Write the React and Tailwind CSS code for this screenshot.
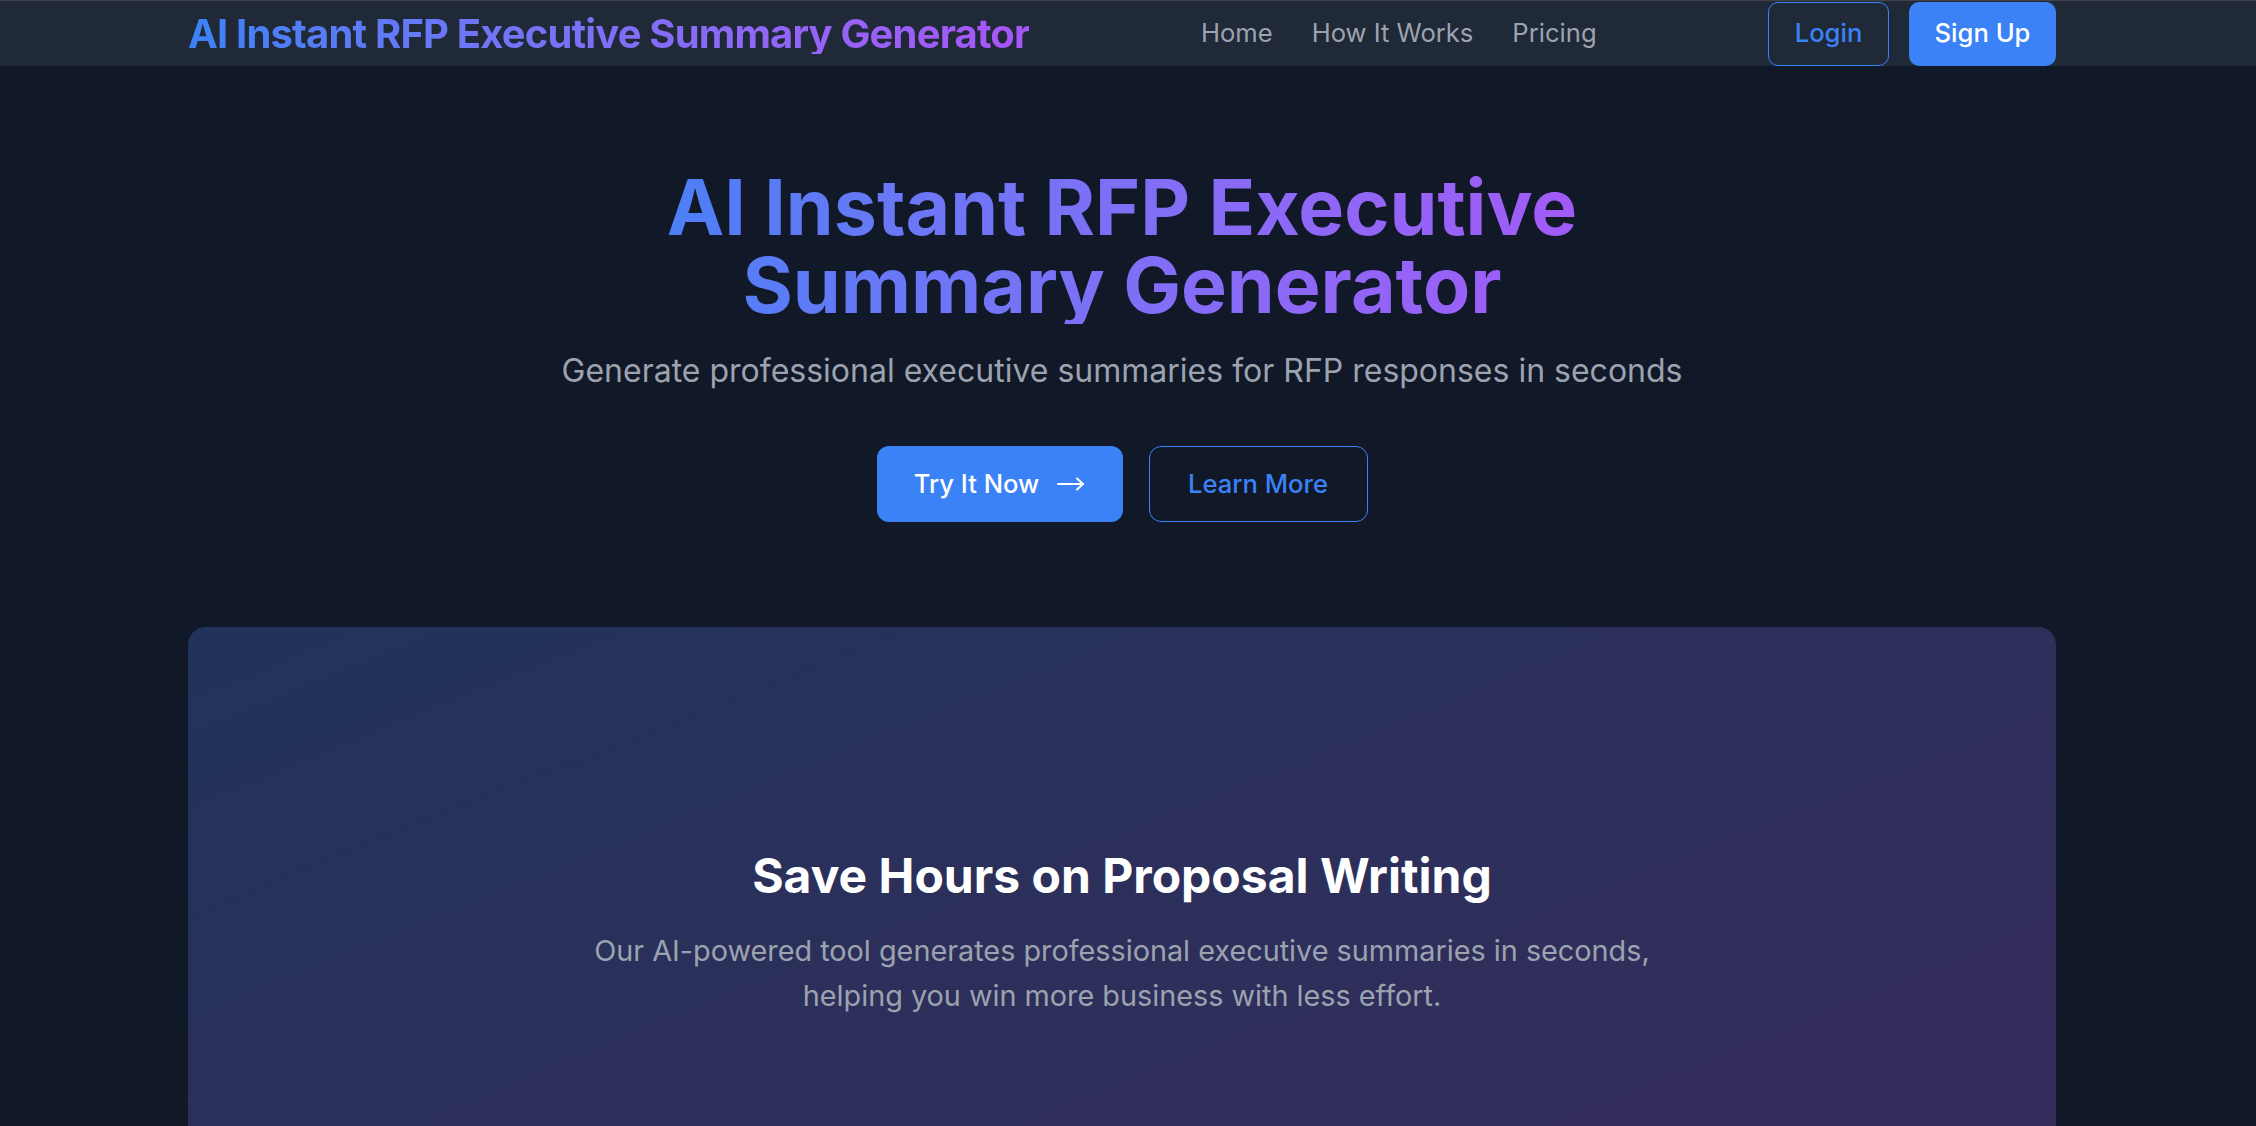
const navLinks = ['Home', 'How It Works', 'Pricing'];

function LongArrow() {
  return (
    <svg width="28" height="14" viewBox="0 0 28 14" fill="none" stroke="currentColor" strokeWidth="2" strokeLinecap="round" strokeLinejoin="round">
      <path d="M1 7h25" />
      <path d="M20 1.5 26 7l-6 5.5" />
    </svg>
  );
}

function Header() {
  return (
    <header className="bg-[#1f2937] border-t border-[#3f4349]">
      <div className="w-[2244px]">
        <div className="ml-[188px] w-[1868px] h-[65px] flex items-center justify-between">
          <a className="text-[40px] font-bold leading-none tracking-[-0.021em] bg-linear-to-r from-[#3b82f6] to-[#a855f7] bg-clip-text text-transparent">
            AI Instant RFP Executive Summary Generator
          </a>
          <nav className="flex items-center gap-[39px] text-[25.6px] text-[#9ca3af]">
            {navLinks.map((l) => (
              <a key={l}>{l}</a>
            ))}
          </nav>
          <div className="flex items-center gap-[20px] self-stretch">
            <button className="h-[64px] w-[121px] rounded-[10px] border border-[#3b82f6] text-[#3b82f6] text-[25.6px] font-medium">
              Login
            </button>
            <button className="h-[64px] w-[147px] rounded-[10px] bg-[#3b82f6] text-white text-[25.6px] font-medium">
              Sign Up
            </button>
          </div>
        </div>
      </div>
    </header>
  );
}

function Hero() {
  return (
    <section className="flex flex-col items-center text-center pt-[102px]">
      <h1 className="max-w-[1106px] text-[77px] leading-[78px] font-bold bg-linear-to-r from-[#3b82f6] to-[#a855f7] bg-clip-text text-transparent">
        AI Instant RFP Executive Summary Generator
      </h1>
      <p className="mt-[27px] text-[32px] leading-[40px] text-[#9ca3af]">
        Generate professional executive summaries for RFP responses in seconds
      </p>
      <div className="mt-[55px] flex gap-[26px]">
        <button className="h-[76px] w-[246px] rounded-[12px] bg-[#3b82f6] text-white text-[25.6px] font-medium flex items-center justify-center gap-[18px]">
          Try It Now
          <LongArrow />
        </button>
        <button className="h-[76px] w-[219px] rounded-[12px] border-[1.5px] border-[#3b82f6] text-[#3b82f6] text-[25.6px] font-medium">
          Learn More
        </button>
      </div>
    </section>
  );
}

function FeatureCard() {
  return (
    <section className="mt-[105px] ml-[188px] w-[1868px] min-h-[760px] rounded-[18px] bg-linear-to-br from-[#21335a] to-[#382a5c] flex flex-col items-center text-center pt-[219px]">
      <h2 className="text-[48px] leading-[60px] font-bold text-white">Save Hours on Proposal Writing</h2>
      <p className="mt-[23px] max-w-[1106px] text-[28.8px] leading-[44.6px] text-[#9ca3af]">
        Our AI-powered tool generates professional executive summaries in seconds, helping you win more business with less effort.
      </p>
    </section>
  );
}

export default function App() {
  return (
    <div className="min-h-[1126px] bg-[#111827] font-['Inter',sans-serif] overflow-hidden">
      <Header />
      <div className="w-[2244px]">
        <Hero />
        <FeatureCard />
      </div>
    </div>
  );
}
